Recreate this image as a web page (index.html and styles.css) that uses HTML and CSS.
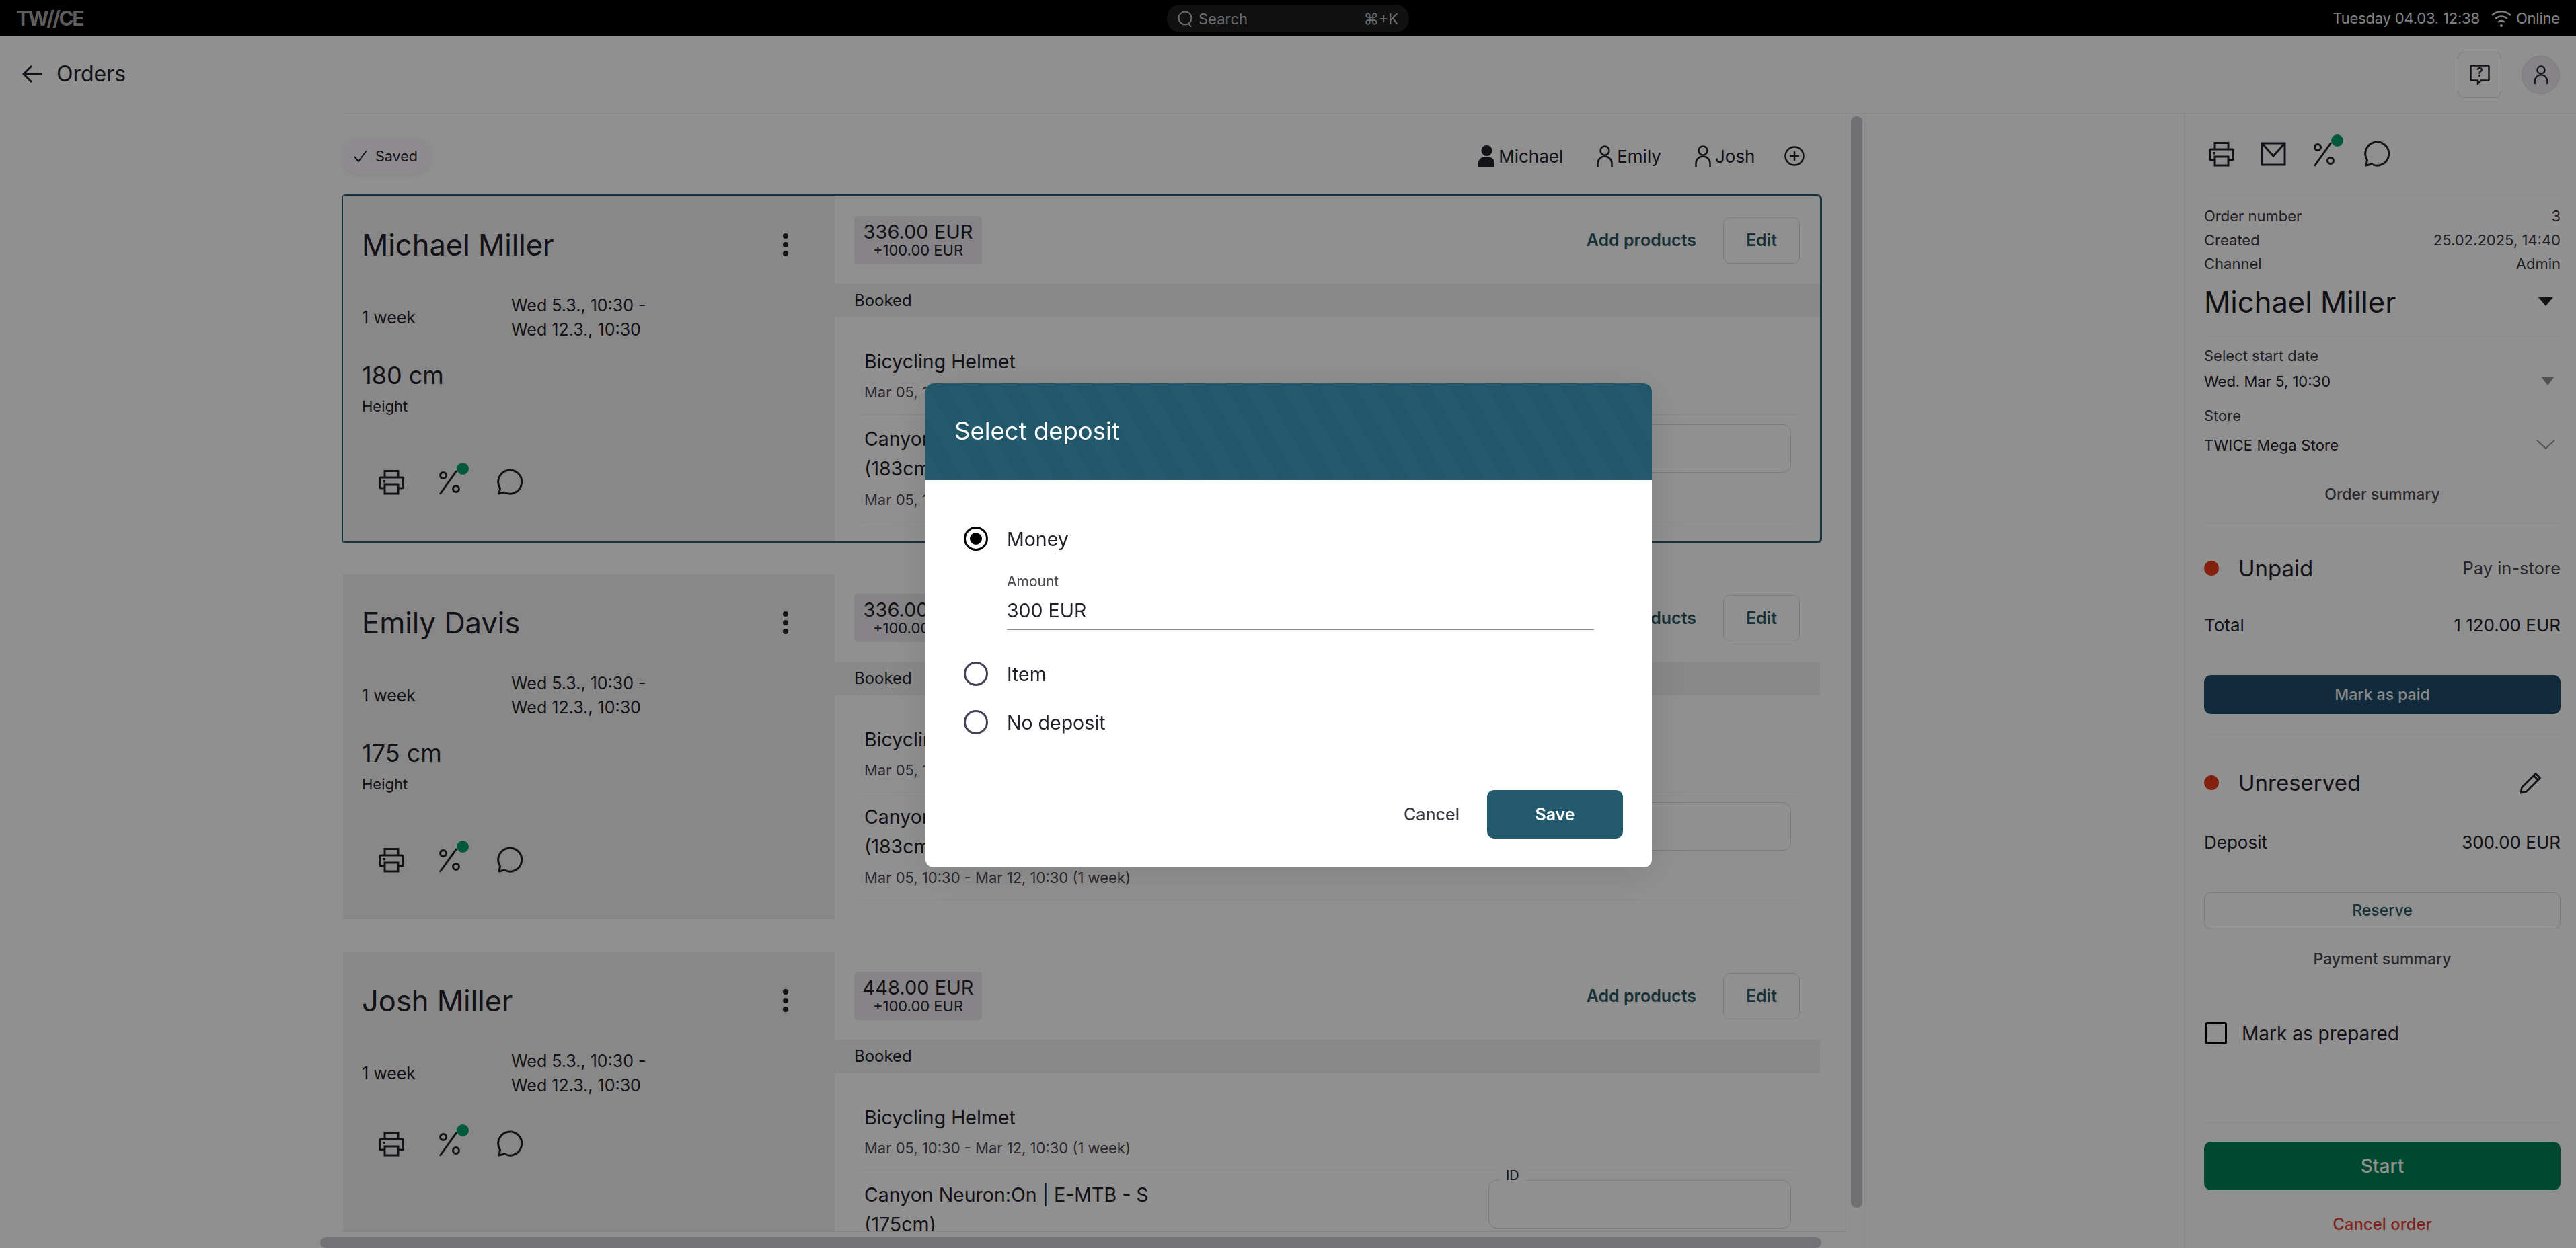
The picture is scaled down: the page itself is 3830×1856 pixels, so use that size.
FILE: index.html
```html
<!DOCTYPE html>
<html lang="en">

<head>
    <meta charset="UTF-8">
    <meta name="viewport" content="width=device-width, initial-scale=1.0">
    <title>Orders</title>
    <link rel="stylesheet" href="styles.css">
</head>

<body>
    <!-- Shared icons -->
    <svg class="icon-defs" aria-hidden="true">
        <symbol id="i-printer" viewBox="0 0 38 38">
            <path d="M9 12V2.5h20V12M9 28H3.5a2 2 0 0 1-2-2V14a2 2 0 0 1 2-2h31a2 2 0 0 1 2 2v12a2 2 0 0 1-2 2H29M9 23h20v13H9z" fill="none" stroke="currentColor" stroke-width="3" />
            <rect x="6" y="16" width="4" height="3.5" fill="currentColor" />
        </symbol>
        <symbol id="i-mail" viewBox="0 0 38 38">
            <path d="M2 3h34v32H2zM2 3l17 19L36 3" fill="none" stroke="currentColor" stroke-width="3" />
        </symbol>
        <symbol id="i-percent" viewBox="0 0 38 38">
            <circle cx="8" cy="9" r="4.5" fill="none" stroke="currentColor" stroke-width="3" />
            <circle cx="27" cy="29" r="4.5" fill="none" stroke="currentColor" stroke-width="3" />
            <path d="M3 37L28 2" fill="none" stroke="currentColor" stroke-width="3" />
            <ellipse cx="37" cy="-1" rx="9" ry="9" fill="#009e69" />
        </symbol>
        <symbol id="i-chat" viewBox="0 0 38 38">
            <path d="M3 36l1.500-8A17.500 17.500 0 1 1 11 34z" fill="none" stroke="currentColor" stroke-width="3" stroke-linejoin="round" />
        </symbol>
        <symbol id="i-person" viewBox="0 0 24 32">
            <circle cx="12" cy="8" r="6.500" fill="none" stroke="currentColor" stroke-width="2.500" />
            <path d="M1.500 32v-5a10.500 10.500 0 0 1 21 0v5" fill="none" stroke="currentColor" stroke-width="2.500" />
        </symbol>
        <symbol id="i-person-fill" viewBox="0 0 24 32">
            <ellipse cx="12.500" cy="8" rx="8" ry="8" fill="currentColor" />
            <path d="M0 32v-5c0-6 4-10 12-10s12 4 12 10v5z" fill="currentColor" />
        </symbol>
        <symbol id="i-dots" viewBox="0 0 10 36">
            <circle cx="5" cy="5" r="4" fill="currentColor" />
            <circle cx="5" cy="18" r="4" fill="currentColor" />
            <circle cx="5" cy="31" r="4" fill="currentColor" />
        </symbol>
    </svg>

    <div class="topbar">
        <div class="logo">TW//CE</div>
        <div class="search">
            <svg class="search-icon" viewBox="0 0 22 24">
                <circle cx="11" cy="11" r="9.500" fill="none" stroke="currentColor" stroke-width="2" />
                <path d="M16 19l4 5" fill="none" stroke="currentColor" stroke-width="2" />
            </svg>
            <span class="search-text">Search</span>
            <span class="search-key">⌘+K</span>
        </div>
        <div class="status">
            <span>Tuesday 04.03. 12:38</span>
            <svg class="wifi" viewBox="0 0 32 26">
                <path d="M2 9a20 20 0 0 1 28 0M7 14a13 13 0 0 1 18 0M11 19a7 7 0 0 1 10 0" fill="none" stroke="currentColor" stroke-width="2.500" />
                <circle cx="16" cy="24" r="2" fill="currentColor" />
            </svg>
            <span>Online</span>
        </div>
    </div>

    <header class="page-header">
        <div class="title-row">
            <svg class="back" viewBox="0 0 30 28">
                <path d="M14 2L2 14l12 12M2 14h28" fill="none" stroke="currentColor" stroke-width="3" />
            </svg>
            <span>Orders</span>
        </div>
        <div class="header-actions">
            <div class="help-btn">
                <svg class="help-icon" viewBox="0 0 30 30">
                    <path d="M3 1.500h24a1.500 1.500 0 0 1 1.500 1.500v19a1.500 1.500 0 0 1-1.500 1.500H17l-5 5v-5H3A1.500 1.500 0 0 1 1.500 22V3A1.500 1.500 0 0 1 3 1.500z" fill="none" stroke="currentColor" stroke-width="2.500" />
                    <text x="15" y="18" text-anchor="middle" class="help-mark">?</text>
                </svg>
            </div>
            <div class="avatar">
                <svg class="avatar-icon"><use href="#i-person" /></svg>
            </div>
        </div>
    </header>

    <div class="main">
        <div class="scroll-area">
            <div class="scroll-view">
                <div class="toolbar">
                    <div class="saved">
                        <svg class="check" viewBox="0 0 22 22">
                            <path d="M2 12l6 7L20 3" fill="none" stroke="currentColor" stroke-width="2" />
                        </svg>
                        <span>Saved</span>
                    </div>
                    <div class="people">
                        <div class="person"><svg class="person-icon"><use href="#i-person-fill" /></svg>Michael</div>
                        <div class="person"><svg class="person-icon"><use href="#i-person" /></svg>Emily</div>
                        <div class="person"><svg class="person-icon"><use href="#i-person" /></svg>Josh</div>
                        <svg class="add-person" viewBox="0 0 30 30">
                            <circle cx="15" cy="15" r="13.500" fill="none" stroke="currentColor" stroke-width="2.500" />
                            <path d="M15 8v14M8 15h14" fill="none" stroke="currentColor" stroke-width="2.500" />
                        </svg>
                    </div>
                </div>

                <section class="card card-active">
                    <div class="card-side">
                        <div class="name-row">
                            <span>Michael Miller</span>
                            <svg class="dots"><use href="#i-dots" /></svg>
                        </div>
                        <div class="period">
                            <span>1 week</span>
                            <span>Wed 5.3., 10:30 -<br>Wed 12.3., 10:30</span>
                        </div>
                        <div class="height-block">
                            <div class="height-value">180 cm</div>
                            <div class="height-label">Height</div>
                        </div>
                        <div class="tools">
                            <svg class="tool"><use href="#i-printer" /></svg>
                            <svg class="tool"><use href="#i-percent" /></svg>
                            <svg class="tool"><use href="#i-chat" /></svg>
                        </div>
                    </div>
                    <div class="card-main">
                        <div class="card-head">
                            <div class="price">
                                <div class="price-main">336.00 EUR</div>
                                <div class="price-sub">+100.00 EUR</div>
                            </div>
                            <div class="head-actions">
                                <span class="link">Add products</span>
                                <span class="edit-btn">Edit</span>
                            </div>
                        </div>
                        <div class="group-bar">Booked</div>
                        <div class="item item-first">
                            <div>
                                <div class="item-title">Bicycling Helmet</div>
                                <div class="item-date">Mar 05, 10:30 - Mar 12, 10:30 (1 week)</div>
                            </div>
                        </div>
                        <div class="item">
                            <div>
                                <div class="item-title">Canyon Neuron:On | E-MTB - M<br>(183cm)</div>
                                <div class="item-date">Mar 05, 10:30 - Mar 12, 10:30 (1 week)</div>
                            </div>
                            <div class="id-field"><span class="id-label">ID</span></div>
                        </div>
                    </div>
                </section>

                <section class="card">
                    <div class="card-side">
                        <div class="name-row">
                            <span>Emily Davis</span>
                            <svg class="dots"><use href="#i-dots" /></svg>
                        </div>
                        <div class="period">
                            <span>1 week</span>
                            <span>Wed 5.3., 10:30 -<br>Wed 12.3., 10:30</span>
                        </div>
                        <div class="height-block">
                            <div class="height-value">175 cm</div>
                            <div class="height-label">Height</div>
                        </div>
                        <div class="tools">
                            <svg class="tool"><use href="#i-printer" /></svg>
                            <svg class="tool"><use href="#i-percent" /></svg>
                            <svg class="tool"><use href="#i-chat" /></svg>
                        </div>
                    </div>
                    <div class="card-main">
                        <div class="card-head">
                            <div class="price">
                                <div class="price-main">336.00 EUR</div>
                                <div class="price-sub">+100.00 EUR</div>
                            </div>
                            <div class="head-actions">
                                <span class="link">Add products</span>
                                <span class="edit-btn">Edit</span>
                            </div>
                        </div>
                        <div class="group-bar">Booked</div>
                        <div class="item item-first">
                            <div>
                                <div class="item-title">Bicycling Helmet</div>
                                <div class="item-date">Mar 05, 10:30 - Mar 12, 10:30 (1 week)</div>
                            </div>
                        </div>
                        <div class="item">
                            <div>
                                <div class="item-title">Canyon Neuron:On | E-MTB - M<br>(183cm)</div>
                                <div class="item-date">Mar 05, 10:30 - Mar 12, 10:30 (1 week)</div>
                            </div>
                            <div class="id-field"><span class="id-label">ID</span></div>
                        </div>
                    </div>
                </section>

                <section class="card">
                    <div class="card-side">
                        <div class="name-row">
                            <span>Josh Miller</span>
                            <svg class="dots"><use href="#i-dots" /></svg>
                        </div>
                        <div class="period">
                            <span>1 week</span>
                            <span>Wed 5.3., 10:30 -<br>Wed 12.3., 10:30</span>
                        </div>
                        <div class="tools">
                            <svg class="tool"><use href="#i-printer" /></svg>
                            <svg class="tool"><use href="#i-percent" /></svg>
                            <svg class="tool"><use href="#i-chat" /></svg>
                        </div>
                    </div>
                    <div class="card-main">
                        <div class="card-head">
                            <div class="price">
                                <div class="price-main">448.00 EUR</div>
                                <div class="price-sub">+100.00 EUR</div>
                            </div>
                            <div class="head-actions">
                                <span class="link">Add products</span>
                                <span class="edit-btn">Edit</span>
                            </div>
                        </div>
                        <div class="group-bar">Booked</div>
                        <div class="item item-first">
                            <div>
                                <div class="item-title">Bicycling Helmet</div>
                                <div class="item-date">Mar 05, 10:30 - Mar 12, 10:30 (1 week)</div>
                            </div>
                        </div>
                        <div class="item">
                            <div>
                                <div class="item-title">Canyon Neuron:On | E-MTB - S<br>(175cm)</div>
                                <div class="item-date">Mar 05, 10:30 - Mar 12, 10:30 (1 week)</div>
                            </div>
                            <div class="id-field"><span class="id-label">ID</span></div>
                        </div>
                    </div>
                </section>
                <div class="thumb-v"></div>
            </div>
            <div class="thumb-h"></div>
        </div>

        <aside class="summary">
            <div class="summary-icons">
                <svg class="tool"><use href="#i-printer" /></svg>
                <svg class="tool"><use href="#i-mail" /></svg>
                <svg class="tool"><use href="#i-percent" /></svg>
                <svg class="tool"><use href="#i-chat" /></svg>
            </div>
            <hr class="rule rule-icons">
            <div class="meta">
                <div class="row"><span>Order number</span><span>3</span></div>
                <div class="row"><span>Created</span><span>25.02.2025, 14:40</span></div>
                <div class="row"><span>Channel</span><span>Admin</span></div>
            </div>
            <div class="customer">
                <span>Michael Miller</span>
                <span class="caret"></span>
            </div>
            <hr class="rule rule-customer">
            <div class="field-label label-date">Select start date</div>
            <div class="row field-value value-date">
                <span>Wed. Mar 5, 10:30</span>
                <span class="caret caret-small"></span>
            </div>
            <div class="field-label label-store">Store</div>
            <div class="row field-value value-store">
                <span>TWICE Mega Store</span>
                <svg class="chevron" viewBox="0 0 28 15">
                    <path d="M1 1l13 12L27 1" fill="none" stroke="currentColor" stroke-width="2" />
                </svg>
            </div>
            <div class="summary-link link-order">Order summary</div>
            <hr class="rule rule-order">

            <div class="state state-paid">
                <span class="state-dot"></span>
                <span class="state-name">Unpaid</span>
                <span class="state-note">Pay in-store</span>
            </div>
            <div class="row amount amount-total"><span>Total</span><span>1 120.00 EUR</span></div>
            <div class="btn btn-dark">Mark as paid</div>
            <hr class="rule rule-paid">

            <div class="state state-reserved">
                <span class="state-dot"></span>
                <span class="state-name">Unreserved</span>
                <svg class="pencil" viewBox="0 0 34 34">
                    <path d="M2 32l1.500-8L24 3.500l6.500 6.500L10 30.500zM21 6.500l6.500 6.500" fill="none" stroke="currentColor" stroke-width="2.800" />
                </svg>
            </div>
            <div class="row amount amount-deposit"><span>Deposit</span><span>300.00 EUR</span></div>
            <div class="btn btn-outline">Reserve</div>
            <div class="summary-link link-payment">Payment summary</div>

            <div class="prepared">
                <span class="checkbox"></span>
                <span>Mark as prepared</span>
            </div>
            <hr class="rule rule-prepared">
            <div class="btn btn-start">Start</div>
            <div class="cancel-order">Cancel order</div>
        </aside>
    </div>

    <!-- Deposit dialog -->
    <div class="overlay">
        <div class="modal">
            <div class="modal-head">Select deposit</div>
            <div class="modal-body">
                <div class="option option-money">
                    <span class="radio radio-on"></span>
                    <span>Money</span>
                </div>
                <div class="amount-field">
                    <div class="amount-label">Amount</div>
                    <div class="amount-value">300 EUR</div>
                </div>
                <div class="option option-item">
                    <span class="radio"></span>
                    <span>Item</span>
                </div>
                <div class="option option-none">
                    <span class="radio"></span>
                    <span>No deposit</span>
                </div>
                <div class="modal-actions">
                    <span class="modal-cancel">Cancel</span>
                    <span class="modal-save">Save</span>
                </div>
            </div>
        </div>
    </div>
</body>

</html>
```

FILE: styles.css
```css
* {
    box-sizing: border-box;
}

html,
body {
    margin: 0;
    height: 1856px;
    overflow: hidden;
}

body {
    font-family: Inter, "Noto Sans", sans-serif;
    color: #23212a;
    background-color: #fffdff;
}

.icon-defs {
    width: 0;
    height: 0;
    position: absolute;
}

symbol {
    overflow: visible;
}

/* Top bar */
.topbar {
    height: 54px;
    background-color: #000;
    display: grid;
    grid-template-columns: 1fr 360px 1fr;
    align-items: center;
    padding: 0 24px 0 24px;
    color: #b4b4b4;
}

.logo {
    font-size: 30px;
    font-weight: 700;
    letter-spacing: -2.5px;
    color: #a2a2a2;
}

.search {
    height: 41px;
    margin-top: 1px;
    border-radius: 20px;
    background-color: #1e1e21;
    display: flex;
    align-items: center;
    padding: 0 16px;
    color: #c0c0c4;
    font-size: 22px;
}

.search-icon {
    width: 22px;
    height: 24px;
    margin-right: 9px;
}

.search-key {
    margin-left: auto;
}

.status {
    display: flex;
    justify-content: flex-end;
    align-items: center;
    font-size: 22px;
    color: #e4e4e4;
    letter-spacing: -0.2px;
}

.wifi {
    width: 32px;
    height: 26px;
    margin: 0 6px 0 16px;
}

/* Page header */
.page-header {
    height: 114px;
    display: flex;
    justify-content: space-between;
    align-items: center;
    padding: 0 24px 0 33px;
}

.title-row {
    display: flex;
    align-items: center;
    gap: 21px;
    font-size: 32px;
    margin-top: -3px;
}

.back {
    width: 30px;
    height: 28px;
}

.header-actions {
    display: flex;
    align-items: center;
    gap: 30px;
}

.help-btn {
    width: 65px;
    height: 69px;
    border: 1px solid #d7d5da;
    border-radius: 10px;
    display: flex;
    align-items: center;
    justify-content: center;
}

.help-icon {
    width: 30px;
    height: 30px;
}

.help-mark {
    font-size: 18px;
    font-weight: 600;
    fill: currentColor;
}

.avatar {
    width: 57px;
    height: 57px;
    border-radius: 50%;
    background-color: #ebe9ec;
    border: 1px solid #d7d5da;
    display: flex;
    align-items: center;
    justify-content: center;
}

.avatar-icon {
    width: 26px;
    height: 28px;
}

/* Main area */
.main {
    margin-left: 508px;
    height: 1688px;
    display: flex;
    border-top: 1px solid #f1eff2;
}

.scroll-area {
    width: 2265px;
    flex: none;
    border-right: 1px solid #f1eff2;
    position: relative;
}

.scroll-view {
    width: 2237px;
    height: 1663px;
    overflow: hidden;
    border-right: 1px solid #e8e6ea;
    border-bottom: 1px solid #e8e6ea;
    padding-top: 37px;
}

.thumb-v {
    position: absolute;
    left: 2244px;
    top: 4px;
    width: 17px;
    height: 1623px;
    border-radius: 8px;
    background-color: #c6c4ca;
}

.thumb-h {
    position: absolute;
    left: -32px;
    top: 1671px;
    width: 2232px;
    height: 16px;
    border-radius: 8px;
    background-color: #cbc8ce;
}

.toolbar {
    width: 2200px;
    height: 52px;
    margin-bottom: 32px;
    display: flex;
    justify-content: space-between;
    align-items: center;
}

.saved {
    width: 133px;
    height: 52px;
    border-radius: 26px;
    background-color: #f9f7fa;
    box-shadow: 0 2px 12px rgba(0, 0, 0, 0.08);
    display: flex;
    align-items: center;
    padding-left: 17px;
    gap: 11px;
    font-size: 21.500px;
}

.check {
    width: 22px;
    height: 22px;
}

.people {
    display: flex;
    align-items: center;
    font-size: 26px;
    padding-right: 25px;
}

.person {
    display: flex;
    align-items: center;
    gap: 6px;
    margin-right: 50px;
}

.person-icon {
    width: 24px;
    height: 32px;
}

.add-person {
    width: 30px;
    height: 30px;
    margin-left: -6.500px;
}

/* Order cards */
.card {
    width: 2200px;
    height: 517px;
    margin-bottom: 45px;
    border: 2px solid transparent;
    border-radius: 6px;
    display: flex;
}

.card-active {
    border-color: #245a6d;
    box-shadow: 0 0 0 1px #245a6d;
}

.card-side {
    width: 731px;
    flex: none;
    background-color: #f1f0f1;
    padding: 50px 68px 0 28px;
}

.name-row {
    height: 44px;
    display: flex;
    justify-content: space-between;
    align-items: center;
    font-size: 43.500px;
}

.dots {
    width: 10px;
    height: 36px;
}

.period {
    margin-top: 50px;
    display: grid;
    grid-template-columns: 222px auto;
    align-items: center;
    font-size: 25px;
    line-height: 36px;
}

.height-block {
    margin-top: 28px;
    height: 112px;
}

.height-value {
    font-size: 36px;
    line-height: 44px;
}

.height-label {
    font-size: 22px;
    line-height: 28px;
    margin-top: 10px;
}

.tools {
    margin-top: 50px;
    padding-left: 25px;
    display: flex;
    gap: 50px;
}

.tool {
    width: 38px;
    height: 38px;
    overflow: visible;
    color: #23212a;
}

.card-main {
    flex: 1;
    min-width: 0;
}

.card-head {
    height: 130px;
    display: flex;
    justify-content: space-between;
    align-items: center;
    padding: 0 30px 0 29px;
}

.price {
    width: 190px;
    height: 72px;
    border-radius: 5px;
    background-color: #ebe9ec;
    text-align: center;
    padding-top: 9px;
}

.price-main {
    font-size: 29px;
    line-height: 30px;
}

.price-sub {
    font-size: 22px;
    line-height: 24px;
}

.head-actions {
    display: flex;
    align-items: center;
    gap: 40px;
}

.link {
    font-size: 25px;
    font-weight: 600;
    color: #2a5862;
}

.edit-btn {
    width: 114px;
    height: 69px;
    border: 1px solid #d7d5da;
    border-radius: 10px;
    display: flex;
    align-items: center;
    justify-content: center;
    font-size: 25px;
    font-weight: 600;
    color: #2a5862;
}

.group-bar {
    height: 50px;
    padding-left: 29px;
    background-color: #f1eff1;
    font-size: 24px;
    line-height: 50px;
}

.item {
    margin: 0 33px 0 40px;
    padding: 14px 10px 19px 4px;
    border-bottom: 1px solid #f3f1f4;
    display: flex;
    justify-content: space-between;
}

.item-first {
    padding-top: 48px;
}

.item-title {
    font-size: 28.500px;
    line-height: 44px;
}

.item-first .item-title {
    line-height: 36px;
}

.item-date {
    font-size: 22px;
    line-height: 28px;
    margin-top: 10px;
    color: #4a484f;
}

.item-first .item-date {
    margin-top: 13px;
}

.id-field {
    width: 450px;
    height: 72px;
    border: 1px solid #d7d5da;
    border-radius: 12px;
    position: relative;
}

.id-label {
    position: absolute;
    left: 15px;
    top: -21px;
    padding: 0 10px;
    font-size: 20px;
    line-height: 26px;
    background-color: #fffdff;
}

/* Summary column */
.summary {
    width: 583px;
    margin-left: auto;
    flex: none;
    border-left: 1px solid #f1eff2;
    padding: 0 23px 0 29px;
}

.summary-icons {
    margin-top: 41px;
    padding-left: 7px;
    display: flex;
    gap: 39px;
}

.rule {
    margin: 0;
    border: 0;
    border-top: 1px solid #f1eff2;
}

.rule-icons {
    margin-top: 41px;
}

.rule-customer {
    margin-top: 25px;
}

.rule-order {
    margin-top: 28px;
}

.rule-paid {
    margin-top: 29px;
}

.rule-prepared {
    margin-top: 115px;
}

.row {
    display: flex;
    justify-content: space-between;
    align-items: center;
}

.meta {
    padding-top: 14px;
    font-size: 22px;
    line-height: 35.5px;
    color: #3b3940;
}

.customer {
    margin-top: 12px;
    height: 52px;
    display: flex;
    justify-content: space-between;
    align-items: center;
    font-size: 43.500px;
    color: #1d1b22;
}

.caret {
    width: 0;
    height: 0;
    margin-right: 11px;
    border-left: 11px solid transparent;
    border-right: 11px solid transparent;
    border-top: 13px solid #23212a;
}

.caret-small {
    margin-right: 9px;
    border-left-width: 10px;
    border-right-width: 10px;
    border-top-color: #8d8b92;
}

.field-label,
.field-value {
    font-size: 22px;
    line-height: 30px;
}

.field-label {
    color: #3b3940;
}

.label-date {
    margin-top: 13px;
}

.value-date {
    margin-top: 8px;
}

.label-store {
    margin-top: 21px;
}

.value-store {
    margin-top: 14px;
    letter-spacing: 0.2px;
}

.chevron {
    width: 28px;
    height: 15px;
    margin-right: 8px;
    color: #8d8b92;
}

.summary-link {
    font-size: 23px;
    font-weight: 500;
    line-height: 30px;
    text-align: center;
    color: #4a484f;
}

.link-order {
    margin-top: 43px;
}

.link-payment {
    margin-top: 29px;
}

.state {
    height: 44px;
    display: flex;
    align-items: center;
}

.state-paid {
    margin-top: 44px;
}

.state-reserved {
    margin-top: 50px;
}

.state-dot {
    width: 22px;
    height: 22px;
    border-radius: 50%;
    background-color: #e63a1c;
    margin-right: 29px;
}

.state-name {
    font-size: 33px;
}

.state-note {
    margin-left: auto;
    font-size: 25.500px;
    color: #4a484f;
}

.pencil {
    width: 34px;
    height: 34px;
    margin: 0 27px 0 auto;
}

.amount {
    font-size: 26px;
    line-height: 36px;
}

.amount-total {
    margin-top: 45px;
}

.amount-deposit {
    margin-top: 49px;
}

.btn {
    border-radius: 10px;
    display: flex;
    align-items: center;
    justify-content: center;
    font-weight: 500;
    font-size: 23px;
}

.btn-dark {
    margin-top: 56px;
    height: 58px;
    background-color: #1f4d6a;
    color: #f0f0f0;
}

.btn-outline {
    margin-top: 56px;
    height: 55px;
    border: 1px solid #d7d5da;
    color: #2a5862;
}

.btn-start {
    margin-top: 28px;
    height: 72px;
    background-color: #007f53;
    color: #fff;
    font-size: 28px;
}

.prepared {
    margin-top: 79px;
    height: 34px;
    display: flex;
    align-items: center;
    font-size: 28px;
    padding-left: 2px;
    gap: 22px;
}

.checkbox {
    width: 32px;
    height: 33px;
    border: 3px solid #000;
    border-radius: 3px;
}

.cancel-order {
    margin-top: 36px;
    font-size: 24px;
    font-weight: 500;
    line-height: 30px;
    text-align: center;
    color: #e0402f;
}

/* Dialog */
.overlay {
    position: fixed;
    inset: 0;
    background-color: rgba(0, 0, 0, 0.43);
    display: flex;
    align-items: center;
    justify-content: center;
    padding: 4px 0 0 2px;
}

.modal {
    width: 1080px;
    height: 720px;
    background-color: #fff;
    border-radius: 12px;
    overflow: hidden;
    box-shadow: 0 8px 60px rgba(0, 0, 0, 0.12);
}

.modal-head {
    height: 144px;
    padding-left: 43px;
    display: flex;
    align-items: center;
    padding-bottom: 2px;
    font-size: 36.500px;
    color: #fff;
    background: repeating-linear-gradient(60deg, #245a6d 0 24px, #225669 24px 48px);
}

.modal-body {
    padding: 69px 43px 0 57px;
}

.option {
    height: 36px;
    display: flex;
    align-items: center;
    gap: 28px;
    font-size: 28.500px;
    color: #23212a;
}

.radio {
    width: 36px;
    height: 36px;
    border: 3.500px solid #45435a;
    border-radius: 50%;
    flex: none;
    display: flex;
    align-items: center;
    justify-content: center;
}

.radio-on {
    border-color: #000;
}

.radio-on::after {
    content: "";
    width: 18px;
    height: 18px;
    border-radius: 50%;
    background-color: #000;
}

.amount-field {
    width: 873px;
    margin: 33px 0 0 64px;
    padding-bottom: 10px;
    border-bottom: 1px solid #8a898c;
}

.amount-label {
    font-size: 21px;
    line-height: 26px;
    color: #4a484f;
}

.amount-value {
    margin-top: 12px;
    font-size: 28.500px;
    line-height: 36px;
    color: #23212a;
}

.option-item {
    margin-top: 47px;
}

.option-none {
    margin-top: 36px;
}

.modal-actions {
    margin-top: 83px;
    display: flex;
    justify-content: flex-end;
    align-items: center;
    gap: 41px;
    font-size: 25px;
}

.modal-cancel {
    font-weight: 500;
    color: #3b3940;
}

.modal-save {
    width: 202px;
    height: 72px;
    border-radius: 10px;
    background-color: #245a6d;
    color: #fff;
    font-weight: 600;
    display: flex;
    align-items: center;
    justify-content: center;
}
```
